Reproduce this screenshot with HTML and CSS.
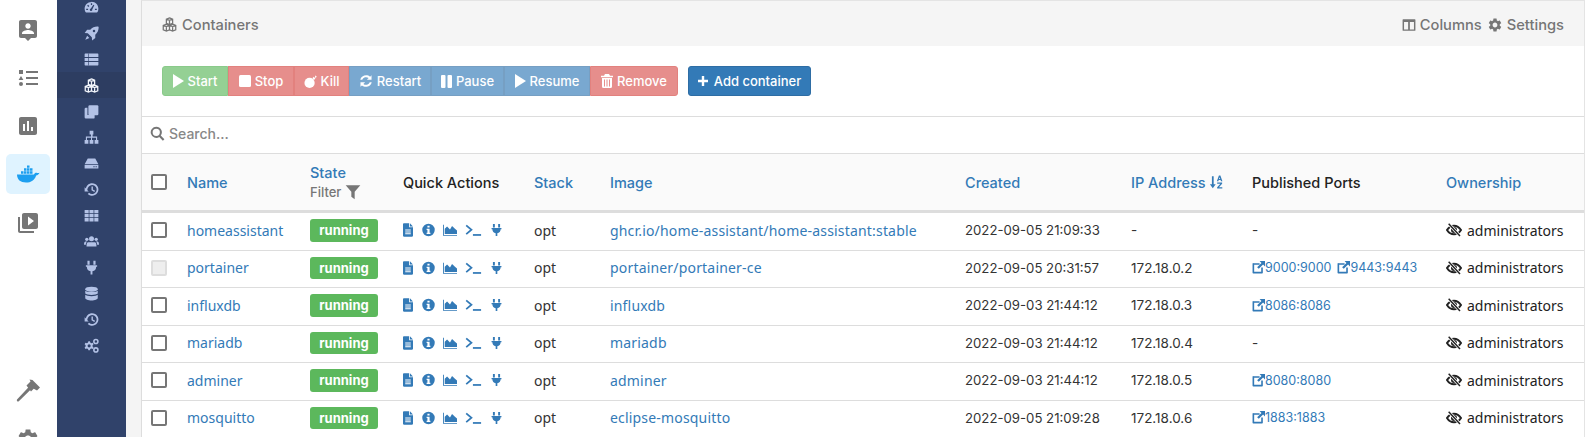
FILE: index.html
```html
<!DOCTYPE html>
<html lang="en">
<head>
<meta charset="utf-8">
<title>Containers</title>
<link rel="stylesheet" href="styles.css">
</head>
<body>
<svg class="sprite" aria-hidden="true">
  <symbol id="i-pin" viewBox="0 0 24 24"><path d="M19 2H5c-1.11 0-2 .9-2 2v14c0 1.1.89 2 2 2h4l3 3 3-3h4c1.1 0 2-.9 2-2V4c0-1.1-.9-2-2-2zm-7 3.3c1.49 0 2.7 1.21 2.7 2.7 0 1.49-1.21 2.7-2.7 2.7-1.49 0-2.7-1.21-2.7-2.7 0-1.49 1.21-2.7 2.7-2.7zM18 16H6v-.9c0-2 4-3.1 6-3.1s6 1.1 6 3.1v.9z"/></symbol>
  <symbol id="i-list" viewBox="0 0 24 24"><path d="M3 4h4v4H3zM10 5h12v2H10zM10 11h12v2H10zM10 17h12v2H10zM5 10l2.400 4H2.600zM5 16a2 2 0 1 1 0 4 2 2 0 0 1 0-4z"/></symbol>
  <symbol id="i-chart" viewBox="0 0 24 24"><path d="M19 3H5c-1.1 0-2 .9-2 2v14c0 1.1.9 2 2 2h14c1.100 0 2-.9 2-2V5c0-1.100-.9-2-2-2zM9 17H7v-7h2v7zm4 0h-2V7h2v10zm4 0h-2v-4h2v4z"/></symbol>
  <symbol id="i-docker" viewBox="0 0 24 24"><path d="M1 12.500h17c.6-1.700 2-2 3-1.600.9.300 1.700.2 2.500-.2-.5 1.600-1.800 2.500-3.400 2.700C18.800 18 15 20.500 10 20.500c-5.500 0-9-3-9-8z"/><path d="M5 9.300h2.500v2.500H5zM8 9.300h2.500v2.500H8zM11 9.300h2.500v2.500H11zM14 9.300h2.500v2.500H14zM8 6.300h2.500v2.500H8zM11 6.300h2.500v2.500H11zM14 6.300h2.500v2.500H14zM11 3.500h2.500v2.300H11z"/></symbol>
  <symbol id="i-video" viewBox="0 0 24 24"><path d="M4 6H2v14c0 1.100.9 2 2 2h14v-2H4V6zm16-4H8c-1.100 0-2 .9-2 2v12c0 1.100.9 2 2 2h12c1.100 0 2-.9 2-2V4c0-1.100-.9-2-2-2zm-8 12.500v-9l6 4.500-6 4.500z"/></symbol>
  <symbol id="i-hammer" viewBox="0 0 24 24"><path d="M1 21.500 12.500 9.200l2.300 2.300L2.800 23.300a1.300 1.300 0 0 1-1.800-1.800zM10.500 7.500 14.500 3.500 13.500 1.500l3 .6L24 9.500l-3 3-3.300-1.800-2.700 2.700z"/></symbol>
  <symbol id="i-gear" viewBox="0 0 24 24"><path d="M19.140 12.940c.04-.3.06-.61.06-.94 0-.32-.02-.64-.07-.94l2.030-1.580c.18-.14.23-.41.12-.61l-1.920-3.320c-.12-.22-.37-.29-.59-.22l-2.390.96c-.5-.38-1.030-.7-1.620-.94l-.36-2.540c-.04-.24-.24-.41-.48-.41h-3.840c-.24 0-.43.17-.47.41l-.36 2.540c-.59.24-1.130.57-1.620.94l-2.390-.96c-.22-.08-.47 0-.59.22L2.740 8.870c-.12.21-.08.47.12.61l2.030 1.580c-.05.3-.09.63-.09.94s.02.64.07.94l-2.030 1.580c-.18.14-.23.41-.12.61l1.920 3.320c.12.22.37.29.59.22l2.390-.96c.5.38 1.030.7 1.620.94l.36 2.540c.05.24.24.41.48.41h3.840c.24 0 .44-.17.47-.41l.36-2.540c.59-.24 1.130-.56 1.620-.94l2.390.96c.22.08.47 0 .59-.22l1.920-3.320c.12-.22.07-.47-.12-.61l-2.010-1.580zM12 15.600c-1.980 0-3.600-1.620-3.600-3.600s1.620-3.600 3.600-3.600 3.600 1.620 3.600 3.600-1.620 3.600-3.600 3.600z"/></symbol>
  <symbol id="i-tach" viewBox="0 0 24 24"><path fill-rule="evenodd" d="M12 3C5.500 3 1 8 1 14c0 2 .5 3.800 1.300 5.300.3.500.7.700 1.200.700h17c.5 0 .9-.2 1.200-.7.800-1.500 1.300-3.300 1.300-5.300 0-6-4.500-11-11-11zM11 5h2v3h-2zM5 9l1.500-1.500 2 2L7 11zM3.500 14h3v2h-3zM17.500 14h3v2h-3zM11 13.500l4-6 1.500 1-3.300 6.500a2 2 0 1 1-2.200-1.500z"/></symbol>
  <symbol id="i-rocket" viewBox="0 0 24 24"><path fill-rule="evenodd" d="M23 1c-5-.5-9.500 1-13 5H5L1 11l5 .5L12.500 18l.5 5 5-4v-5c4-3.500 5.500-8 5.500-13zM16 6a2 2 0 1 1 0 4 2 2 0 0 1 0-4z"/><path d="M5 15.500 8.500 19 4 21l-2 1 1-2z"/></symbol>
  <symbol id="i-thlist" viewBox="0 0 24 24"><path d="M1 3.500a1 1 0 0 1 1-1h20a1 1 0 0 1 1 1V8H1zM1 9.500h22v5H1zM1 16h22v4.500a1 1 0 0 1-1 1H2a1 1 0 0 1-1-1z"/><path fill="#30426a" d="M6.500 2.500h1v19h-1z"/></symbol>
  <symbol id="i-cubes" viewBox="0 0 24 24"><path fill="none" stroke="currentColor" stroke-width="2" d="M12 1.500l5 2v6.500l-5 2-5-2V3.500zM7 3.500l5 2 5-2M12 5.500V12M7 11.500l5 2v7l-5 2-5-2v-7zM2 13.500l5 2 5-2M7 15.500v7M17 11.500l5 2v7l-5 2-5-2v-7zM12 13.500l5 2 5-2M17 15.500v7"/></symbol>
  <symbol id="i-clone" viewBox="0 0 24 24"><path d="M9 2h12a2 2 0 0 1 2 2v12a2 2 0 0 1-2 2H9a2 2 0 0 1-2-2V4a2 2 0 0 1 2-2z"/><path d="M5.500 6v11.500H17V22a1 1 0 0 1-1 1H3a2 2 0 0 1-2-2V8a2 2 0 0 1 2-2z"/></symbol>
  <symbol id="i-sitemap" viewBox="0 0 24 24"><path d="M9 1h6v6h-1.200v3.500H21V16h2v6h-6v-6h2.200v-3.500h-6.400V16H15v6H9v-6h2.200v-3.500H4.800V16H7v6H1v-6h2v-5.500h8.200V7H9z"/></symbol>
  <symbol id="i-hdd" viewBox="0 0 24 24"><path d="M6 4h12l5 9H1zM1 14.500h22V20H1zM15 16.500v1.500h2v-1.500zM18.500 16.500v1.500h2v-1.500z" fill-rule="evenodd"/></symbol>
  <symbol id="i-history" viewBox="0 0 24 24"><path d="M13 2C8 2 3.800 5.500 3 10.500L1 8.500V15h6.500l-2.300-2.300C5.700 8.300 9 4.800 13 4.800a7.200 7.200 0 1 1-5 12.400l-1.900 2A10 10 0 1 0 13 2z"/><path d="M12 7h2.200v5l3.500 2-1.100 1.900L12 13.300z"/></symbol>
  <symbol id="i-th" viewBox="0 0 24 24"><path d="M1 3h6.500v5.500H1zM8.700 3h6.600v5.500H8.700zM16.500 3H23v5.500h-6.500zM1 9.700h6.500v5H1zM8.700 9.700h6.600v5H8.700zM16.500 9.700H23v5h-6.500zM1 16h6.500v5.500H1zM8.700 16h6.600v5.500H8.700zM16.500 16H23v5.500h-6.500z"/></symbol>
  <symbol id="i-users" viewBox="0 0 24 24"><circle cx="12" cy="7.500" r="4"/><circle cx="4.500" cy="8.500" r="2.700"/><circle cx="19.500" cy="8.500" r="2.700"/><path d="M6.500 13h11c1.500 0 2.500 2 2.500 7H4c0-5 1-7 2.500-7zM0 17c0-3 1-5 2.500-5h2.300C3.500 13.500 3 15 3 17zM24 17c0-3-1-5-2.500-5h-2.300c1.300 1.500 1.800 3 1.800 5z"/></symbol>
  <symbol id="i-plug" viewBox="2 0 20 24"><path d="M5.500 1h3.500v6.500H5.500zM15 1h3.500v6.500H15zM3 8.500h18v2.200h-1.500c0 4.300-2.500 6.800-6 7.300v5h-3v-5c-3.500-.5-6-3-6-7.300H3z"/></symbol>
  <symbol id="i-db" viewBox="0 0 24 24"><ellipse cx="12" cy="5" rx="10" ry="4"/><path d="M2 7.500C4 10 20 10 22 7.500V12c-2 3-18 3-20 0zM2 14c2 3 18 3 20 0v5c0 2-4.500 4-10 4s-10-2-10-4z"/></symbol>
  <symbol id="i-cogs" viewBox="0 0 24 24"><path fill-rule="evenodd" d="M7 5l2.400.3.600 2 1.700 1L14 7.500 15.300 10l-1.600 1.500v2L15.300 15 14 17.500l-2.300-.8-1.700 1-.6 2H7l-.6-2-1.700-1-2.300.8L1 15l1.600-1.500v-2L1 10l1.400-2.500 2.300.8 1.700-1zM8.200 10a2.500 2.500 0 1 0 0 5 2.500 2.500 0 0 0 0-5z"/><path fill-rule="evenodd" d="M19 1a4.500 4.500 0 1 1 0 9 4.500 4.500 0 0 1 0-9zM19 3.500a2 2 0 1 0 0 4 2 2 0 0 0 0-4zM19 14.500a4.500 4.500 0 1 1 0 9 4.500 4.500 0 0 1 0-9zM19 17a2 2 0 1 0 0 4 2 2 0 0 0 0-4z"/></symbol>
  <symbol id="i-play" viewBox="0 0 11 14"><path d="M0 0 11 7 0 14z"/></symbol>
  <symbol id="i-stop" viewBox="0 0 12 12"><rect width="12" height="12" rx="1.500"/></symbol>
  <symbol id="i-bomb" viewBox="0 0 14 14"><circle cx="6" cy="8.500" r="5.500"/><path d="M9 3.500l1.500-1.500 1.800 1.800-1.500 1.500z"/><path d="M11.800 0l.7 1 1.500.3-1 .8.200 1.400-1.200-.8"/></symbol>
  <symbol id="i-refresh" viewBox="0 0 24 24"><path d="M21.500 2v8h-8l3-3A7 7 0 0 0 5.500 10H2.200A10.300 10.300 0 0 1 19 4.500zM2.500 22v-8h8l-3 3a7 7 0 0 0 11-3h3.300A10.300 10.300 0 0 1 5 19.500z"/></symbol>
  <symbol id="i-pause" viewBox="0 0 11 13"><rect width="4.500" height="13" rx="1"/><rect x="6.500" width="4.500" height="13" rx="1"/></symbol>
  <symbol id="i-trash" viewBox="0 0 12 14"><path fill-rule="evenodd" d="M4 0h4l1 1.800h3V3.200H0V1.800h3zM1 4h10v8.500a1.500 1.500 0 0 1-1.500 1.500h-7A1.500 1.500 0 0 1 1 12.500zM3 5.500v7h1v-7zM5.500 5.500v7h1v-7zM8 5.500v7h1v-7z"/></symbol>
  <symbol id="i-plus" viewBox="0 0 10 10"><path d="M3.800 0h2.400v3.800H10v2.400H6.200V10H3.800V6.200H0V3.800h3.800z"/></symbol>
  <symbol id="i-columns" viewBox="0 0 24 24"><path fill-rule="evenodd" d="M2 2h20a1 1 0 0 1 1 1v18a1 1 0 0 1-1 1H2a1 1 0 0 1-1-1V3a1 1 0 0 1 1-1zM3.500 7v12.500h7V7zM13.500 7v12.500h7V7z"/></symbol>
  <symbol id="i-search" viewBox="0 0 24 24"><path fill-rule="evenodd" d="M10 1a9 9 0 0 1 7.200 14.300l5.800 5.900-2.400 2.400-5.800-5.900A9 9 0 1 1 10 1zm0 3.200a5.800 5.800 0 1 0 0 11.600 5.800 5.800 0 0 0 0-11.600z"/></symbol>
  <symbol id="i-filter" viewBox="0 0 24 24"><path d="M1 2h22l-8.500 9.500V23l-5-4v-7.500z"/></symbol>
  <symbol id="i-sort" viewBox="0 0 24 24"><path d="M5 2h3v14h3.500l-5 6.500-5-6.500H5z"/><path fill-rule="evenodd" d="M17 1h2.500L23 10.500h-2.500l-.6-1.800h-3.300l-.6 1.800h-2.500zm1.200 3-1 2.800h2z"/><path d="M14 13h8.500v2l-5.500 6h5.800v2H14v-2l5.500-6H14z"/></symbol>
  <symbol id="i-doc" viewBox="0 0 18 24"><path fill-rule="evenodd" d="M1.500 0H11v7h7v15.500a1.500 1.500 0 0 1-1.500 1.500h-15A1.500 1.500 0 0 1 0 22.500v-21A1.500 1.500 0 0 1 1.500 0zM4 11v1.800h10V11zM4 14.500v1.800h10v-1.800zM4 18v1.800h10V18z"/><path d="M12.500 0 18 5.500h-5.500z"/></symbol>
  <symbol id="i-info" viewBox="0 0 24 24"><path fill-rule="evenodd" d="M12 .5a11.500 11.500 0 1 1 0 23 11.500 11.500 0 0 1 0-23zM10 4v3.500h4V4zM8.500 9.500V12H10v5H8.500v2.500h7V17H14V9.500z"/></symbol>
  <symbol id="i-area" viewBox="0 0 24 24"><path d="M0 3h1.500v17.500H24V22H0z"/><path d="M3 19V10l4-4 5 5 3.500-6 5 5 3.500 3v6z"/></symbol>
  <symbol id="i-term" viewBox="0 0 28 24"><path d="M1.500 4 10.500 11.500 1.500 19" fill="none" stroke="currentColor" stroke-width="3"/><path d="M13 19h14v3H13z"/></symbol>
  <symbol id="i-ext" viewBox="0 0 24 24"><path d="M3 4h11v3H4v13h13V12h3v9.500a1.500 1.500 0 0 1-1.500 1.500h-16A1.500 1.500 0 0 1 1 21.500v-16A1.500 1.500 0 0 1 3 4z"/><path d="M14 0h10v10l-3.500-3.500-8 8-3-3 8-8z"/></symbol>
  <symbol id="i-eyeoff" viewBox="0 0 24 20"><path fill="none" stroke="currentColor" stroke-width="3" d="M1.500 10C4 6 8 3.500 12 3.500S20 6 22.500 10C20 14 16 16.500 12 16.500S4 14 1.500 10z"/><circle cx="12" cy="10" r="4.500"/><path d="M4 .5 21 19" stroke="#fff" stroke-width="4.500"/><path d="M4 .5 21 19" stroke="currentColor" stroke-width="2.200"/></symbol>
</svg>

<div class="app">
  <aside class="rail">
    <a class="rail-item"><svg class="rail-icon"><use href="#i-pin"/></svg></a>
    <a class="rail-item"><svg class="rail-icon"><use href="#i-list"/></svg></a>
    <a class="rail-item"><svg class="rail-icon"><use href="#i-chart"/></svg></a>
    <a class="rail-item rail-active"><svg class="rail-icon"><use href="#i-docker"/></svg></a>
    <a class="rail-item"><svg class="rail-icon"><use href="#i-video"/></svg></a>
    <div class="rail-bottom">
      <a class="rail-item"><svg class="rail-icon"><use href="#i-hammer"/></svg></a>
      <a class="rail-item"><svg class="rail-icon"><use href="#i-gear"/></svg></a>
    </div>
  </aside>

  <nav class="nav">
    <a class="nav-item"><svg class="nav-icon"><use href="#i-tach"/></svg></a>
    <a class="nav-item"><svg class="nav-icon"><use href="#i-rocket"/></svg></a>
    <a class="nav-item"><svg class="nav-icon"><use href="#i-thlist"/></svg></a>
    <a class="nav-item nav-active"><svg class="nav-icon"><use href="#i-cubes"/></svg></a>
    <a class="nav-item"><svg class="nav-icon"><use href="#i-clone"/></svg></a>
    <a class="nav-item"><svg class="nav-icon"><use href="#i-sitemap"/></svg></a>
    <a class="nav-item"><svg class="nav-icon"><use href="#i-hdd"/></svg></a>
    <a class="nav-item"><svg class="nav-icon"><use href="#i-history"/></svg></a>
    <a class="nav-item"><svg class="nav-icon"><use href="#i-th"/></svg></a>
    <a class="nav-item"><svg class="nav-icon"><use href="#i-users"/></svg></a>
    <a class="nav-item"><svg class="nav-icon"><use href="#i-plug"/></svg></a>
    <a class="nav-item"><svg class="nav-icon"><use href="#i-db"/></svg></a>
    <a class="nav-item"><svg class="nav-icon"><use href="#i-history"/></svg></a>
    <a class="nav-item"><svg class="nav-icon"><use href="#i-cogs"/></svg></a>
  </nav>

  <main class="main">
    <section class="panel">
      <header class="heading">
        <div class="heading-title"><svg class="ico ico-15"><use href="#i-cubes"/></svg><span>Containers</span></div>
        <div class="heading-tools">
          <span class="tool"><svg class="ico ico-14"><use href="#i-columns"/></svg>Columns</span>
          <span class="tool"><svg class="ico ico-16"><use href="#i-gear"/></svg>Settings</span>
        </div>
      </header>

      <div class="actions">
        <div class="btn-group">
          <button class="btn btn-off btn-green btn-start"><svg class="bi bi-play"><use href="#i-play"/></svg>Start</button>
          <button class="btn btn-off btn-red btn-stop"><svg class="bi bi-stop"><use href="#i-stop"/></svg>Stop</button>
          <button class="btn btn-off btn-red btn-kill"><svg class="bi bi-bomb"><use href="#i-bomb"/></svg>Kill</button>
          <button class="btn btn-off btn-blue btn-restart"><svg class="bi bi-refresh"><use href="#i-refresh"/></svg>Restart</button>
          <button class="btn btn-off btn-blue btn-pause"><svg class="bi bi-pause"><use href="#i-pause"/></svg>Pause</button>
          <button class="btn btn-off btn-blue btn-resume"><svg class="bi bi-play"><use href="#i-play"/></svg>Resume</button>
          <button class="btn btn-off btn-red btn-remove"><svg class="bi bi-trash"><use href="#i-trash"/></svg>Remove</button>
        </div>
        <button class="btn btn-blue btn-add"><svg class="bi bi-plus"><use href="#i-plus"/></svg>Add container</button>
      </div>

      <div class="search">
        <svg class="ico ico-15"><use href="#i-search"/></svg>
        <input class="search-input" type="text" placeholder="Search...">
      </div>

      <div class="table">
        <div class="row row-head">
          <div class="cell"><span class="check"></span></div>
          <div class="cell"><a class="link">Name</a></div>
          <div class="cell cell-stack">
            <a class="link">State</a>
            <span class="filter">Filter <svg class="ico ico-16"><use href="#i-filter"/></svg></span>
          </div>
          <div class="cell">Quick Actions</div>
          <div class="cell"><a class="link">Stack</a></div>
          <div class="cell"><a class="link">Image</a></div>
          <div class="cell"><a class="link">Created</a></div>
          <div class="cell"><a class="link link-sort">IP Address <svg class="ico ico-14"><use href="#i-sort"/></svg></a></div>
          <div class="cell">Published Ports</div>
          <div class="cell"><a class="link">Ownership</a></div>
        </div>

        <div class="row">
          <div class="cell"><span class="check"></span></div>
          <div class="cell"><a class="link">homeassistant</a></div>
          <div class="cell"><span class="badge">running</span></div>
          <div class="cell quick"><svg class="q q-doc"><use href="#i-doc"/></svg><svg class="q q-info"><use href="#i-info"/></svg><svg class="q q-area"><use href="#i-area"/></svg><svg class="q q-term"><use href="#i-term"/></svg><svg class="q q-plug"><use href="#i-plug"/></svg></div>
          <div class="cell">opt</div>
          <div class="cell cell-image"><a class="link">ghcr.io/home-assistant/home-assistant:stable</a></div>
          <div class="cell cell-num">2022-09-05 21:09:33</div>
          <div class="cell cell-ip">-</div>
          <div class="cell cell-ip">-</div>
          <div class="cell owner"><svg class="eye"><use href="#i-eyeoff"/></svg>administrators</div>
        </div>

        <div class="row">
          <div class="cell"><span class="check check-off"></span></div>
          <div class="cell"><a class="link">portainer</a></div>
          <div class="cell"><span class="badge">running</span></div>
          <div class="cell quick"><svg class="q q-doc"><use href="#i-doc"/></svg><svg class="q q-info"><use href="#i-info"/></svg><svg class="q q-area"><use href="#i-area"/></svg><svg class="q q-term"><use href="#i-term"/></svg><svg class="q q-plug"><use href="#i-plug"/></svg></div>
          <div class="cell">opt</div>
          <div class="cell cell-image"><a class="link">portainer/portainer-ce</a></div>
          <div class="cell cell-num">2022-09-05 20:31:57</div>
          <div class="cell cell-ip">172.18.0.2</div>
          <div class="cell ports"><a class="link port"><svg class="ico ico-13"><use href="#i-ext"/></svg>9000:9000</a><a class="link port"><svg class="ico ico-13"><use href="#i-ext"/></svg>9443:9443</a></div>
          <div class="cell owner"><svg class="eye"><use href="#i-eyeoff"/></svg>administrators</div>
        </div>

        <div class="row">
          <div class="cell"><span class="check"></span></div>
          <div class="cell"><a class="link">influxdb</a></div>
          <div class="cell"><span class="badge">running</span></div>
          <div class="cell quick"><svg class="q q-doc"><use href="#i-doc"/></svg><svg class="q q-info"><use href="#i-info"/></svg><svg class="q q-area"><use href="#i-area"/></svg><svg class="q q-term"><use href="#i-term"/></svg><svg class="q q-plug"><use href="#i-plug"/></svg></div>
          <div class="cell">opt</div>
          <div class="cell cell-image"><a class="link">influxdb</a></div>
          <div class="cell cell-num">2022-09-03 21:44:12</div>
          <div class="cell cell-ip">172.18.0.3</div>
          <div class="cell ports"><a class="link port"><svg class="ico ico-13"><use href="#i-ext"/></svg>8086:8086</a></div>
          <div class="cell owner"><svg class="eye"><use href="#i-eyeoff"/></svg>administrators</div>
        </div>

        <div class="row">
          <div class="cell"><span class="check"></span></div>
          <div class="cell"><a class="link">mariadb</a></div>
          <div class="cell"><span class="badge">running</span></div>
          <div class="cell quick"><svg class="q q-doc"><use href="#i-doc"/></svg><svg class="q q-info"><use href="#i-info"/></svg><svg class="q q-area"><use href="#i-area"/></svg><svg class="q q-term"><use href="#i-term"/></svg><svg class="q q-plug"><use href="#i-plug"/></svg></div>
          <div class="cell">opt</div>
          <div class="cell cell-image"><a class="link">mariadb</a></div>
          <div class="cell cell-num">2022-09-03 21:44:12</div>
          <div class="cell cell-ip">172.18.0.4</div>
          <div class="cell cell-ip">-</div>
          <div class="cell owner"><svg class="eye"><use href="#i-eyeoff"/></svg>administrators</div>
        </div>

        <div class="row">
          <div class="cell"><span class="check"></span></div>
          <div class="cell"><a class="link">adminer</a></div>
          <div class="cell"><span class="badge">running</span></div>
          <div class="cell quick"><svg class="q q-doc"><use href="#i-doc"/></svg><svg class="q q-info"><use href="#i-info"/></svg><svg class="q q-area"><use href="#i-area"/></svg><svg class="q q-term"><use href="#i-term"/></svg><svg class="q q-plug"><use href="#i-plug"/></svg></div>
          <div class="cell">opt</div>
          <div class="cell cell-image"><a class="link">adminer</a></div>
          <div class="cell cell-num">2022-09-03 21:44:12</div>
          <div class="cell cell-ip">172.18.0.5</div>
          <div class="cell ports"><a class="link port"><svg class="ico ico-13"><use href="#i-ext"/></svg>8080:8080</a></div>
          <div class="cell owner"><svg class="eye"><use href="#i-eyeoff"/></svg>administrators</div>
        </div>

        <div class="row">
          <div class="cell"><span class="check"></span></div>
          <div class="cell"><a class="link">mosquitto</a></div>
          <div class="cell"><span class="badge">running</span></div>
          <div class="cell quick"><svg class="q q-doc"><use href="#i-doc"/></svg><svg class="q q-info"><use href="#i-info"/></svg><svg class="q q-area"><use href="#i-area"/></svg><svg class="q q-term"><use href="#i-term"/></svg><svg class="q q-plug"><use href="#i-plug"/></svg></div>
          <div class="cell">opt</div>
          <div class="cell cell-image"><a class="link">eclipse-mosquitto</a></div>
          <div class="cell cell-num">2022-09-05 21:09:28</div>
          <div class="cell cell-ip">172.18.0.6</div>
          <div class="cell ports"><a class="link port"><svg class="ico ico-13"><use href="#i-ext"/></svg>1883:1883</a></div>
          <div class="cell owner"><svg class="eye"><use href="#i-eyeoff"/></svg>administrators</div>
        </div>
      </div>
    </section>
  </main>
</div>
</body>
</html>
```

FILE: styles.css
```css
* { box-sizing: border-box; }
html, body { margin: 0; height: 100%; overflow: hidden; background: #fff; }
body { font-family: "Noto Sans", Inter, sans-serif; font-size: 14px; color: #333; }
.sprite { display: none; }
svg { fill: currentColor; flex: none; }

.app { display: flex; height: 437px; overflow: hidden; }

.rail { width: 57px; flex: none; display: flex; flex-direction: column; gap: 8.3px; padding: 9.5px 7px 0 6px; background: #fff; color: #767676; }
.rail-item { height: 40px; flex: none; display: flex; align-items: center; justify-content: center; border-radius: 5px; }
.rail-icon { width: 24px; height: 24px; }
.rail-active { background: #dff3ff; color: #1d9ff0; }
.rail-bottom { margin-top: auto; margin-bottom: -22px; display: flex; flex-direction: column; gap: 9px; }

.nav { width: 69px; flex: none; background: #30426a; color: #b3c2e6; display: flex; flex-direction: column; margin-top: -6px; height: 443px; }
.nav-item { height: 26px; flex: none; display: flex; align-items: center; justify-content: center; }
.nav-icon { width: 15px; height: 15px; }
.nav-active { background: #2d3d61; color: #f2f5fb; }

.main { flex: 1; min-width: 0; background: #f4f4f4; padding-left: 15px; }
.panel { background: #fff; border-left: 1px solid #ddd; border-right: 1px solid #e4e4e4; border-top: 1px solid #e4e4e4; height: 100%; }

.heading { height: 45px; background: #f5f5f5; display: flex; align-items: center; justify-content: space-between; padding: 2px 20px 0 20px; color: #767676; font: 500 14.7px Inter, sans-serif; }
.heading-title { display: flex; align-items: center; gap: 5px; }
.heading-tools { display: flex; gap: 5px; }
.tool { display: flex; align-items: center; gap: 4px; }

.ico { display: inline-block; vertical-align: -2px; }
.ico-13 { width: 13px; height: 13px; }
.ico-14 { width: 14px; height: 14px; }
.ico-15 { width: 15px; height: 15px; }
.ico-16 { width: 16px; height: 16px; }

.actions { height: 71px; padding: 20px 0 0 20px; display: flex; align-items: flex-start; gap: 10px; border-bottom: 1px solid #ddd; }
.btn-group { display: flex; }
.btn { height: 30px; display: flex; align-items: center; justify-content: center; gap: 4px; padding: 0; border: 1px solid; font: 500 13px Inter, sans-serif; color: #fff; background: #337ab7; border-color: #2e6da4; }
.btn-off { opacity: .65; }
.btn-green { background: #5cb85c; border-color: #4cae4c; }
.btn-red { background: #d9534f; border-color: #d43f3a; }
.btn-start { width: 66px; border-radius: 3px 0 0 3px; }
.btn-stop { width: 66px; }
.btn-kill { width: 55px; }
.btn-restart { width: 82px; }
.btn-pause { width: 73px; }
.btn-resume { width: 86px; }
.btn-remove { width: 88px; border-radius: 0 3px 3px 0; }
.btn-add { width: 123px; border-radius: 3px; gap: 6px; }
.bi-play { width: 11px; height: 14px; }
.bi-stop { width: 12px; height: 12px; }
.bi-bomb { width: 13px; height: 13px; }
.bi-refresh { width: 14px; height: 14px; }
.bi-pause { width: 11px; height: 13px; }
.bi-trash { width: 12px; height: 14px; }
.bi-plus { width: 10px; height: 10px; }

.search { height: 37px; display: flex; align-items: center; gap: 4px; padding: 0 0 3px 8px; border-bottom: 1px solid #ddd; color: #767676; }
.search-input { flex: 1; border: 0; outline: 0; padding: 0; font: 500 14px Inter, sans-serif; color: #333; background: transparent; }
.search-input::placeholder { color: #888; opacity: 1; }

.row { display: grid; grid-template-columns: 37px 123px 93px 131px 76px 355px 166px 121px 194px 147px; height: 37.5px; align-items: center; padding-bottom: 2px; border-bottom: 1px solid #ddd; }
.row-head { height: 59px; padding-bottom: 0; background: #fafafa; border-bottom: 3px solid #ddd; font: 500 14.5px Inter, sans-serif; color: #222; }
.cell { padding-left: 8px; min-width: 0; white-space: nowrap; display: flex; align-items: center; }
.cell-stack { flex-direction: column; align-items: flex-start; gap: 3px; }
.cell-image { letter-spacing: .18px; }
.cell-num { font: 400 13.2px Inter, sans-serif; }
.cell-ip { font: 400 13.5px Inter, sans-serif; }
.link { color: #337ab7; }
.link-sort { display: inline-flex; align-items: center; gap: 3px; }
.filter { display: flex; align-items: center; gap: 4px; font-size: 13px; font-weight: 500; color: #767676; }

.check { width: 16px; height: 16px; margin-left: 1px; border: 2px solid #767676; border-radius: 2px; background: #fff; }
.check-off { background: #eee; border-color: #ddd; }

.badge { display: inline-flex; width: 68px; height: 22.5px; align-items: center; justify-content: center; border-radius: 3px; background: #5cb85c; color: #fff; font: 700 13px Inter, sans-serif; }

.quick { gap: 0; color: #337ab7; }
.q { height: 14px; }
.q-doc { width: 10px; margin-right: 9px; }
.q-info { width: 13px; margin-right: 8px; }
.q-area { width: 14px; margin-right: 8px; }
.q-term { width: 17px; margin-right: 9px; }
.q-plug { width: 11px; }

.ports { gap: 6px; font: 400 12.5px Inter, sans-serif; }
.port { display: inline-flex; align-items: center; gap: 0; }
.owner { gap: 5px; color: #222; }
.eye { width: 16px; height: 14px; }
```
